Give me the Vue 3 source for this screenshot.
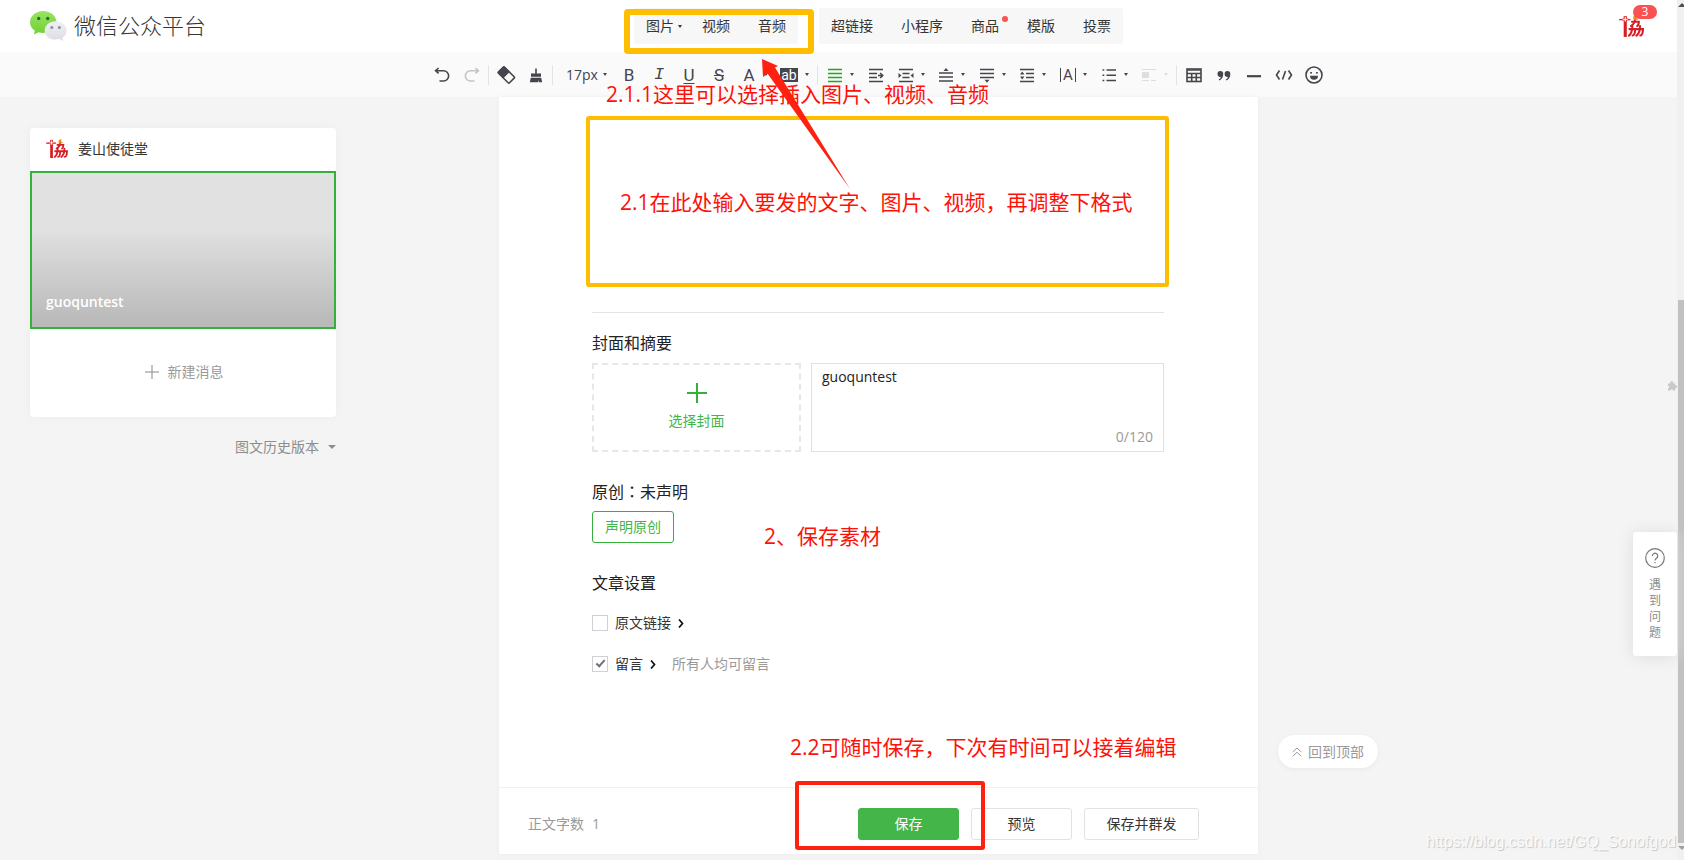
<script setup>
import { ref } from 'vue'

const mediaMenu = [{ label: '图片', caret: true }, { label: '视频' }, { label: '音频' }]
const insertMenu = [
  { label: '超链接' },
  { label: '小程序' },
  { label: '商品', dot: true },
  { label: '模版' },
  { label: '投票' },
]

const icons = {
  undo: '<path d="M4 5.7h7.5a5.1 5.1 0 0 1 0 10.3H7.5"/><path d="M6.6 3 3.6 5.7l3 2.7"/>',
  redo: '<path d="M16 5.7H8.500a5.1 5.1 0 0 0 0 10.300h4"/><path d="m13.400 3 3 2.700-3 2.700"/>',
  eraser:
    '<g transform="rotate(45 10 10)"><rect x="2.500" y="5.500" width="15.500" height="8.500" rx="1"/><rect x="2" y="5" width="8.500" height="9.500" rx="1" fill="currentColor" stroke="none"/></g>',
  brush:
    '<path fill="currentColor" stroke="none" d="M9.200 3.500h1.600v5H15v3.300H5V8.500h4.200zM4.800 12.700h10.400l1 4.500h-3l-.4-2-.6 2H3.800z"/>',
  justify: '<path d="M3 4.500h14M3 8.500h14M3 12.500h14M3 16.500h14"/>',
  indentRight: '<path d="M3 4.500h14M3 8.500h8M3 12.500h8M3 16.500h14M12 10.500h4.500M14.200 8l2.500 2.500-2.500 2.500"/>',
  indentBoth:
    '<path d="M3 4.500h14M6.500 8.500h7M6.500 12.500h7M3 16.500h14"/><path fill="currentColor" stroke="none" d="m2.500 8 3 2.500-3 2.500zM17.500 8l-3 2.500 3 2.500z"/>',
  spaceBefore:
    '<path d="M3 8h14M3 12h14M3 16h14"/><path fill="currentColor" stroke="none" d="m10 3 2.500 3h-5z"/>',
  spaceAfter:
    '<path d="M3 4.500h14M3 8.500h14M3 12.500h14"/><path fill="currentColor" stroke="none" d="m10 17.800 2.500-3h-5z"/>',
  lineHeight:
    '<path d="M3 4.500h14M9 8.500h8M9 12.500h8M3 16.500h14"/><path fill="currentColor" stroke="none" d="m5.200 6.500 2.300 3H3zM5.200 14.500l2.300-3H3z"/>',
  list: '<path d="M7.500 5H17M7.500 10.300H17M7.500 15.500H17"/><path d="M3.500 5h1.800M3.500 10.300h1.800M3.500 15.500h1.800"/>',
  float:
    '<path d="M3 4.500h14M12 15.500h5M3 15.500h7" stroke-width="1"/><rect x="3" y="7" width="7" height="6" fill="currentColor" stroke="none"/>',
  table:
    '<rect x="3" y="4" width="14" height="12.500"/><path d="M3 5h14M3 8.500h14M3 12.500h14M7.700 8.500v8M12.300 8.500v8"/>',
  quote:
    '<path fill="currentColor" stroke="none" d="M6.200 6a3 3 0 0 1 3 3.200c0 3-1.400 5.200-4 6.300l-.5-.9c1.200-.7 1.900-1.500 2.100-2.600A3 3 0 1 1 6.200 6zM13.300 6a3 3 0 0 1 3 3.200c0 3-1.400 5.200-4 6.300l-.5-.9c1.200-.7 1.900-1.500 2.100-2.600A3 3 0 1 1 13.300 6z"/>',
  rule: '<path d="M3 11.200h14" stroke-width="2.200"/>',
  code: '<path d="M5.500 5.500 2.500 10l3 4.500M14.500 5.500l3 4.500-3 4.500M11.500 6l-3 8.500"/>',
  smile:
    '<circle cx="10" cy="10" r="8"/><path d="M6.200 7.800h1.800M12 7.800h1.800"/><path fill="currentColor" stroke="none" d="M6 10.700h8a4 4 0 0 1-8 0z"/>',
}

const history = [
  { icon: 'undo', name: '撤销' },
  { icon: 'redo', name: '重做', off: true },
]
const cleanup = [
  { icon: 'eraser', name: '清除格式' },
  { icon: 'brush', name: '格式刷' },
]
const letters = [
  { text: 'B', kind: 'bold', name: '加粗' },
  { text: 'I', kind: 'italic', name: '斜体' },
  { text: 'U', kind: 'under', name: '下划线' },
  { text: 'S', kind: 'strike', name: '删除线' },
  { text: 'A', kind: 'color', name: '字体颜色', caret: true },
  { text: 'ab', kind: 'back', name: '背景色', caret: true },
]
const paragraph = [
  { icon: 'justify', name: '两端对齐', caret: true, on: true },
  { icon: 'indentRight', name: '首行缩进' },
  { icon: 'indentBoth', name: '两侧缩进', caret: true, compact: true },
  { icon: 'spaceBefore', name: '段前距', caret: true },
  { icon: 'spaceAfter', name: '段后距', caret: true, compact: true },
  { icon: 'lineHeight', name: '行间距', caret: true },
  { text: 'A', kind: 'spacing', name: '字间距', caret: true },
  { icon: 'list', name: '列表', caret: true, compact: true },
  { icon: 'float', name: '浮动', caret: true, off: true },
]
const blocks = [
  { icon: 'table', name: '表格' },
  { icon: 'quote', name: '引用' },
  { icon: 'rule', name: '分隔线' },
  { icon: 'code', name: '代码' },
  { icon: 'smile', name: '表情' },
]
const toolGroups = [
  { id: 'history', tools: history },
  { id: 'cleanup', tools: cleanup },
  { id: 'letters', tools: letters, size: true },
  { id: 'paragraph', tools: paragraph },
  { id: 'blocks', tools: blocks },
]

const summary = ref('guoquntest')
const sourceLink = ref(false)
const comments = ref(true)
const fontSize = ref('17px')
</script>

<template>
  <div class="window">
    <div class="page">
      <svg class="defs" aria-hidden="true">
        <symbol id="emblem" viewBox="0 0 24 22">
          <g fill="none" stroke="#d81e25" stroke-linecap="round">
            <path d="M0.500 4.500h10" stroke-width="1.200" />
            <path d="M6 1v20" stroke-width="3" stroke-linecap="butt" />
            <path d="M12.500 6.500h6.500c0 2.500-.5 3.500-1.500 4M15.500 3.500c0 3.500-1.500 5.500-4 7" stroke-width="2" />
            <path d="M10 13.500h5.500c0 4-.7 6-2.300 6.200M12.800 10.500c0 4.500-1 7.500-3.300 9.300" stroke-width="2" />
            <path d="M17 13.500h6c0 4-.7 6-2.500 6.200M20.200 10.500c0 4.500-1 7.500-3.500 9.300" stroke-width="2" />
          </g>
          <path d="m14 1 3-1-.5 2.500 2 1.500-2.500 1-2.500-1z" fill="#ef8a1d" />
          <path d="M5.200 1.500h1.600v2h2v1.500h-2v1.500H5.200V5h-2V3.500h2z" fill="#fff" stroke="#d81e25" stroke-width=".5" />
        </symbol>
      </svg>

      <header class="topbar">
        <a class="brand" href="#">
          <svg width="37" height="31" viewBox="0 0 37 31" aria-hidden="true">
            <defs>
              <linearGradient id="g1" x1="0" y1="0" x2="0" y2="1">
                <stop offset="0" stop-color="#98e45f" /><stop offset="1" stop-color="#6fd035" />
              </linearGradient>
              <linearGradient id="g2" x1="0" y1="0" x2="0" y2="1">
                <stop offset="0" stop-color="#f0f0f5" /><stop offset="1" stop-color="#dcdce4" />
              </linearGradient>
            </defs>
            <path fill="url(#g1)" d="M13.200 0C5.900 0 0 5 0 11.200c0 3.500 1.900 6.500 4.800 8.600L4 23.500l4.500-2.300c1.500.4 3 .7 4.700.7 7.300 0 13.300-4.800 13.300-10.800S20.500 0 13.200 0z" />
            <circle cx="8.700" cy="7.500" r="1.700" fill="#187032" /><circle cx="17.700" cy="7.500" r="1.700" fill="#187032" />
            <path fill="url(#g2)" d="M25.600 10.200c-6.100 0-10.900 4-10.900 9.200s4.800 9.200 10.900 9.200c1.300 0 2.500-.2 3.700-.5l3.900 1.900-.7-3.200c2.500-1.800 4.100-4.400 4.100-7.400 0-5.200-5-9.200-11-9.200z" />
            <circle cx="21.800" cy="16.500" r="1.500" fill="#8f9096" /><circle cx="29.400" cy="16.500" r="1.500" fill="#8f9096" />
          </svg>
          <span>微信公众平台</span>
        </a>
        <nav class="menus">
          <div class="menu">
            <button v-for="m in mediaMenu" :key="m.label" type="button">
              {{ m.label }}<i v-if="m.caret" class="caret"></i>
            </button>
          </div>
          <div class="menu">
            <button v-for="m in insertMenu" :key="m.label" type="button">
              {{ m.label }}<i v-if="m.dot" class="dot"></i>
            </button>
          </div>
        </nav>
        <a class="account" href="#" aria-label="账号">
          <svg width="25" height="23"><use href="#emblem" /></svg>
          <span class="badge">3</span>
        </a>
      </header>

      <div class="toolbar">
        <div class="tools">
          <template v-for="(g, n) in toolGroups" :key="g.id">
            <span v-if="n" class="sep"></span>
            <label v-if="g.size" class="size">
              <select v-model="fontSize" aria-label="字号">
                <option>17px</option>
              </select>
              <i class="caret"></i>
            </label>
            <button
              v-for="t in g.tools"
              :key="t.name"
              type="button"
              class="tool"
              :class="{ drop: t.caret, compact: t.compact, on: t.on, off: t.off }"
              :aria-label="t.name"
            >
              <svg v-if="t.icon" width="20" height="20" viewBox="0 0 20 20" v-html="icons[t.icon]"></svg>
              <span v-else class="letter" :class="t.kind">{{ t.text }}</span>
              <i v-if="t.caret" class="caret"></i>
            </button>
          </template>
        </div>
      </div>

      <div class="workspace">
        <aside class="side">
          <section class="card">
            <div class="owner">
              <svg width="22" height="20"><use href="#emblem" /></svg>
              <span>姜山使徒堂</span>
            </div>
            <div class="cover">guoquntest</div>
            <button class="create" type="button">
              <svg width="14" height="14" viewBox="0 0 14 14"><path d="M7 0v14M0 7h14" /></svg>
              新建消息
            </button>
          </section>
          <button class="versions" type="button">
            图文历史版本
            <svg width="8" height="4" viewBox="0 0 8 4"><path d="M0 0h8L4 4z" /></svg>
          </button>
        </aside>

        <main class="paper">
          <div class="editor">
            <div class="article"></div>
            <h2>封面和摘要</h2>
            <div class="summary">
              <button class="pick" type="button">
                <svg width="20" height="20" viewBox="0 0 20 20"><path d="M10 0v20M0 10h20" /></svg>
                选择封面
              </button>
              <div class="abstract">
                <textarea v-model="summary" aria-label="摘要"></textarea>
                <span>0/120</span>
              </div>
            </div>
            <h2 class="origin">原创<span class="mid">：</span>未声明</h2>
            <button class="declare" type="button">声明原创</button>
            <h2 class="settings">文章设置</h2>
            <div class="option">
              <input id="source" v-model="sourceLink" type="checkbox" />
              <label for="source">原文链接</label>
              <svg width="6" height="9" viewBox="0 0 6 9"><path d="m1 .5 3.500 4L1 8.500" /></svg>
            </div>
            <div class="option">
              <input id="comments" v-model="comments" type="checkbox" />
              <label for="comments">留言</label>
              <svg width="6" height="9" viewBox="0 0 6 9"><path d="m1 .5 3.500 4L1 8.500" /></svg>
              <span>所有人均可留言</span>
            </div>
          </div>
          <footer class="actions">
            <span class="count">正文字数<b>1</b></span>
            <button class="primary" type="button">保存</button>
            <button type="button">预览</button>
            <button class="wide" type="button">保存并群发</button>
          </footer>
        </main>

        <div class="right">
          <a class="top" href="#">
            <svg width="10" height="10" viewBox="0 0 10 10"><path d="m.7 5 4.300-4L9.300 5M.7 9.300 5 5.300l4.300 4" /></svg>
            回到顶部
          </a>
        </div>
      </div>

      <svg class="plugin" width="10" height="10" viewBox="0 0 10 10" aria-hidden="true">
        <path d="M1 2.500h2.500a1.500 1.500 0 1 1 2.500 0h2.200v2a1.400 1.400 0 1 1 0 2.500v2.500H6a1.200 1.200 0 0 0-2.400 0H1V7.200a1.200 1.200 0 0 0 0-2.400z" />
      </svg>
      <a class="help" href="#">
        <svg width="20" height="20" viewBox="0 0 20 20">
          <circle cx="10" cy="10" r="9.300" />
          <path d="M7.300 8a2.700 2.700 0 1 1 4.200 2.200c-1 .7-1.500 1.100-1.500 2.300M10 14v1.200" />
        </svg>
        <span>遇到问题</span>
      </a>

      <div class="notes">
        <div class="sheet">
          <div class="frame media"></div>
          <div class="frame body"></div>
          <div class="frame save"></div>
          <p class="n1">2.1.1这里可以选择插入图片、视频、音频</p>
          <p class="n2">2.1在此处输入要发的文字、图片、视频，再调整下格式</p>
          <p class="n3">2、保存素材</p>
          <p class="n4">2.2可随时保存，下次有时间可以接着编辑</p>
          <svg class="arrow" width="90" height="132" viewBox="0 0 90 132" aria-hidden="true">
            <path d="M0 0 16 7l-3 1.500L88 130 5.500 14.500 1 18z" />
          </svg>
        </div>
      </div>
      <p class="watermark">https://blog.csdn.net/GQ_Sonofgod</p>
    </div>

    <div class="scroll" aria-hidden="true">
      <svg width="6" height="4" viewBox="0 0 6 4"><path d="m0 4 4-4 4 4z" fill="#505050" /></svg>
      <i></i>
      <svg width="6" height="4" viewBox="0 0 6 4"><path d="m0 0 4 4 4-4z" fill="#a0a0a0" /></svg>
    </div>
  </div>
</template>

<style>
body {
  margin: 0;
  background: #f4f4f4;
}
</style>

<style scoped>
.window {
  display: flex;
  min-height: 100vh;
  font: 14px/20px "Open Sans", "Noto Sans CJK SC", sans-serif;
  color: #353535;
}
button,
select,
textarea {
  font: inherit;
  color: inherit;
}
button {
  margin: 0;
  padding: 0;
  border: 0;
  background: none;
}
a {
  color: inherit;
  text-decoration: none;
}
.page {
  position: relative;
  flex: 1;
  min-width: 0;
  display: flex;
  flex-direction: column;
}
.defs {
  position: absolute;
  width: 0;
  height: 0;
}
.mid {
  font-family: "Noto Sans CJK TC", sans-serif;
}
.caret {
  border: 2px solid transparent;
  border-top: 3px solid currentColor;
  border-bottom: 0;
  width: 0;
  height: 0;
}

.topbar {
  display: grid;
  grid-template-columns: 1fr auto 1fr;
  align-items: center;
  height: 52px;
  padding-left: 80px;
  background: #fff;
  box-shadow: 0 1px 2px #f0f0f0;
}
.brand {
  display: flex;
  align-items: center;
  gap: 7px;
  margin-left: -50px;
  font-size: 22px;
  font-weight: 300;
}
.brand span {
  padding-bottom: 2px;
}
.menus {
  display: flex;
  gap: 21px;
}
.menu {
  display: flex;
  gap: 28px;
  padding: 8px 12px;
  background: #f7f7f7;
  border-radius: 2px;
}
.menu button {
  position: relative;
}
.menu .caret {
  position: absolute;
  left: 32px;
  top: 9px;
}
.dot {
  position: absolute;
  right: -9px;
  top: 0;
  width: 6px;
  height: 6px;
  border-radius: 50%;
  background: #fa5151;
}
.account {
  position: relative;
  justify-self: end;
  height: 23px;
  margin-right: 33px;
}
.badge {
  position: absolute;
  left: 14px;
  top: -10px;
  width: 24px;
  border-radius: 7px;
  background: #fa5151;
  color: #fff;
  font-size: 12px;
  line-height: 14px;
  text-align: center;
}

.toolbar {
  display: flex;
  justify-content: center;
  height: 45px;
  padding-left: 80px;
  background: #fafafa;
}
.tools {
  display: flex;
  align-items: center;
  padding-right: 1px;
  color: #45454d;
}
.sep {
  width: 1px;
  height: 20px;
  margin: 0 2px 0 1px;
  background: #e4e4e4;
}
.tool {
  display: flex;
  align-items: center;
  width: 30px;
  height: 30px;
  padding-left: 5px;
}
.tool svg {
  fill: none;
  stroke: currentColor;
  stroke-width: 1.6px;
  flex: none;
}
.drop {
  width: 41px;
}
.compact {
  width: 40px;
}
.tool .caret {
  margin-left: 5px;
}
.on svg {
  color: #1aad19;
}
.off {
  color: #c4c4c4;
}
.off.drop {
  color: #dedede;
}
.letter {
  flex: none;
  box-sizing: border-box;
  width: 20px;
  font: 17px/20px Roboto, sans-serif;
  text-align: center;
}
.italic {
  font-family: "Liberation Mono", monospace;
  font-style: italic;
}
.under {
  text-decoration: underline;
  text-underline-offset: 2px;
}
.strike {
  text-decoration: line-through;
}
.back {
  width: 18px;
  margin-right: 2px;
  background: #45454d;
  color: #fff;
  font-size: 14px;
  line-height: 14px;
}
.spacing {
  width: 16px;
  margin: 0 2px;
  border: solid;
  border-width: 0 1px;
  font-size: 15px;
  line-height: 14px;
}
.size {
  display: flex;
  align-items: center;
  width: 59px;
}
.size select {
  width: 48px;
  padding: 0 0 0 11px;
  border: 0;
  background: none;
  appearance: none;
}

.workspace {
  flex: 1;
  display: grid;
  grid-template-columns: 1fr 759px 1fr;
  padding: 0 0 6px 80px;
}
.side {
  display: flex;
  flex-direction: column;
  align-items: flex-end;
  width: 306px;
  margin: 31px 0 0 -50px;
}
.card {
  width: 100%;
  height: 289px;
  display: flex;
  flex-direction: column;
  border-radius: 4px;
  background: #fff;
  box-shadow: 0 0 8px #ececec;
}
.owner {
  display: flex;
  align-items: center;
  gap: 10px;
  height: 41px;
  padding: 0 0 2px 16px;
}
.cover {
  display: flex;
  align-items: flex-end;
  box-sizing: border-box;
  height: 158px;
  padding: 0 14px 15px;
  border: 2px solid #35b03b;
  background: linear-gradient(#e1e1e1 36%, #bababa 96%);
  color: #fff;
  font-weight: 600;
}
.create {
  flex: 1;
  display: flex;
  align-items: center;
  justify-content: center;
  gap: 9px;
  padding: 0 0 2px 2px;
  color: #9a9a9a;
}
.create svg {
  stroke: #8a8a8a;
}
.versions {
  display: flex;
  align-items: center;
  gap: 9px;
  margin-top: 20px;
  color: #8d8d8d;
}
.versions svg {
  fill: #8d8d8d;
}

.paper {
  display: flex;
  flex-direction: column;
  background: #fff;
  box-shadow: 0 0 4px #ececec;
}
.editor {
  flex: 1;
  padding: 0 94px 0 93px;
}
.article {
  height: 215px;
  border-bottom: 1px solid #e4e4e4;
}
h2 {
  margin: 18px 0 0;
  font-size: 16px;
  line-height: 24px;
  font-weight: 400;
  color: #222;
}
.summary {
  display: flex;
  gap: 10px;
  height: 89px;
  margin-top: 8px;
}
.pick {
  display: flex;
  flex-direction: column;
  align-items: center;
  justify-content: center;
  gap: 8px;
  width: 209px;
  padding-bottom: 1px;
  border: 2px dashed #e7e7eb;
  color: #44b549;
}
.pick svg {
  stroke: #35b03b;
  stroke-width: 2px;
}
.abstract {
  position: relative;
  flex: 1;
  display: flex;
}
.abstract textarea {
  flex: 1;
  margin: 0;
  padding: 3px 10px;
  border: 1px solid #e0e0e0;
  border-radius: 0;
  resize: none;
  color: #222;
}
.abstract span {
  position: absolute;
  right: 11px;
  bottom: 5px;
  color: #9a9a9a;
}
.origin {
  margin-top: 27px;
}
.declare {
  height: 32px;
  margin-top: 7px;
  padding: 0 12px;
  border: 1px solid #35b03b;
  border-radius: 3px;
  color: #44b549;
  display: block;
}
.settings {
  margin-top: 28px;
}
.option {
  display: flex;
  align-items: center;
  height: 20px;
  margin: 18px 0 21px;
}
.option input {
  appearance: none;
  box-sizing: border-box;
  width: 16px;
  height: 16px;
  margin: 0 7px 0 0;
  border: 1px solid #d0d0d6;
  display: grid;
  place-items: center;
}
.option input:checked::before {
  content: "";
  width: 7px;
  height: 3px;
  border: solid #707070;
  border-width: 0 0 2px 2px;
  transform: rotate(-48deg);
  margin-top: -3px;
}
.option svg {
  margin: 0 16px 0 7px;
  fill: none;
  stroke: #111;
  stroke-width: 1.7px;
}
.option span {
  color: #9a9a9a;
}
.actions {
  display: flex;
  align-items: center;
  gap: 12px;
  height: 61px;
  padding: 5px 59px 0 29px;
  border-top: 1px solid #f0f0f0;
}
.count {
  margin-right: auto;
  color: #9a9a9a;
}
.count b {
  margin-left: 8px;
  font-weight: 400;
}
.actions button {
  box-sizing: border-box;
  width: 101px;
  height: 32px;
  border: 1px solid #e2e2e6;
  border-radius: 3px;
}
.actions .primary {
  border-color: #44b549;
  background: #44b549;
  color: #fff;
}
.actions .wide {
  width: 115px;
}
.right {
  display: flex;
  align-items: flex-end;
  padding: 0 0 86px 20px;
}
.top {
  display: flex;
  align-items: center;
  justify-content: center;
  gap: 6px;
  width: 100px;
  height: 33px;
  border-radius: 17px;
  background: #fff;
  box-shadow: 0 1px 4px #e8e8e8;
  color: #9a9a9a;
}
.top svg {
  fill: none;
  stroke: #9a9a9a;
}

.plugin {
  position: absolute;
  right: 0;
  top: 381px;
  fill: #c8c8c8;
}
.help {
  position: absolute;
  right: 0;
  top: 532px;
  display: flex;
  flex-direction: column;
  align-items: center;
  gap: 9px;
  box-sizing: border-box;
  width: 44px;
  padding: 16px 0 13px;
  border-radius: 3px;
  background: #fff;
  box-shadow: 0 1px 16px #dcdcdc;
  color: #8d8d8d;
  font-size: 12px;
  line-height: 16px;
}
.help svg {
  fill: none;
  stroke: #777;
  stroke-width: 1.2px;
}
.help span {
  width: 12px;
  height: 66px;
}

.notes {
  position: absolute;
  inset: 0 0 0 80px;
  display: flex;
  justify-content: center;
  pointer-events: none;
}
.sheet {
  position: relative;
  width: 759px;
}
.sheet p {
  position: absolute;
  margin: 0;
  color: #fe1108;
  font-size: 21px;
  line-height: 28px;
  white-space: nowrap;
}
.frame {
  position: absolute;
  box-sizing: border-box;
  border: 4px solid #ffbd00;
  border-radius: 3px;
}
.media {
  left: 125px;
  top: 9px;
  width: 190px;
  height: 45px;
  border-width: 6px;
  border-radius: 4px;
}
.body {
  left: 87px;
  top: 116px;
  width: 583px;
  height: 171px;
}
.save {
  left: 296px;
  top: 781px;
  width: 190px;
  height: 69px;
  border-color: #ff200f;
}
.n1 {
  left: 107px;
  top: 80px;
}
.n2 {
  left: 121px;
  top: 188px;
}
.n3 {
  left: 265px;
  top: 522px;
}
.n4 {
  left: 291px;
  top: 733px;
}
.arrow {
  position: absolute;
  left: 263px;
  top: 59px;
  fill: #ff200f;
}
.watermark {
  position: absolute;
  right: 1px;
  bottom: 8px;
  margin: 0;
  color: #fafafa;
  font: 16px/20px "Liberation Sans", sans-serif;
  text-shadow: 1px 1px 1px #c4c4c4;
}

.scroll {
  display: flex;
  flex-direction: column;
  align-items: flex-end;
  justify-content: space-between;
  box-sizing: border-box;
  width: 7px;
  height: 100vh;
  padding: 3px 0 10px;
  background: #f0f0f0;
}
.scroll i {
  width: 6px;
  height: 543px;
  margin: auto 0 3px;
  background: #c1c1c1;
}
</style>
